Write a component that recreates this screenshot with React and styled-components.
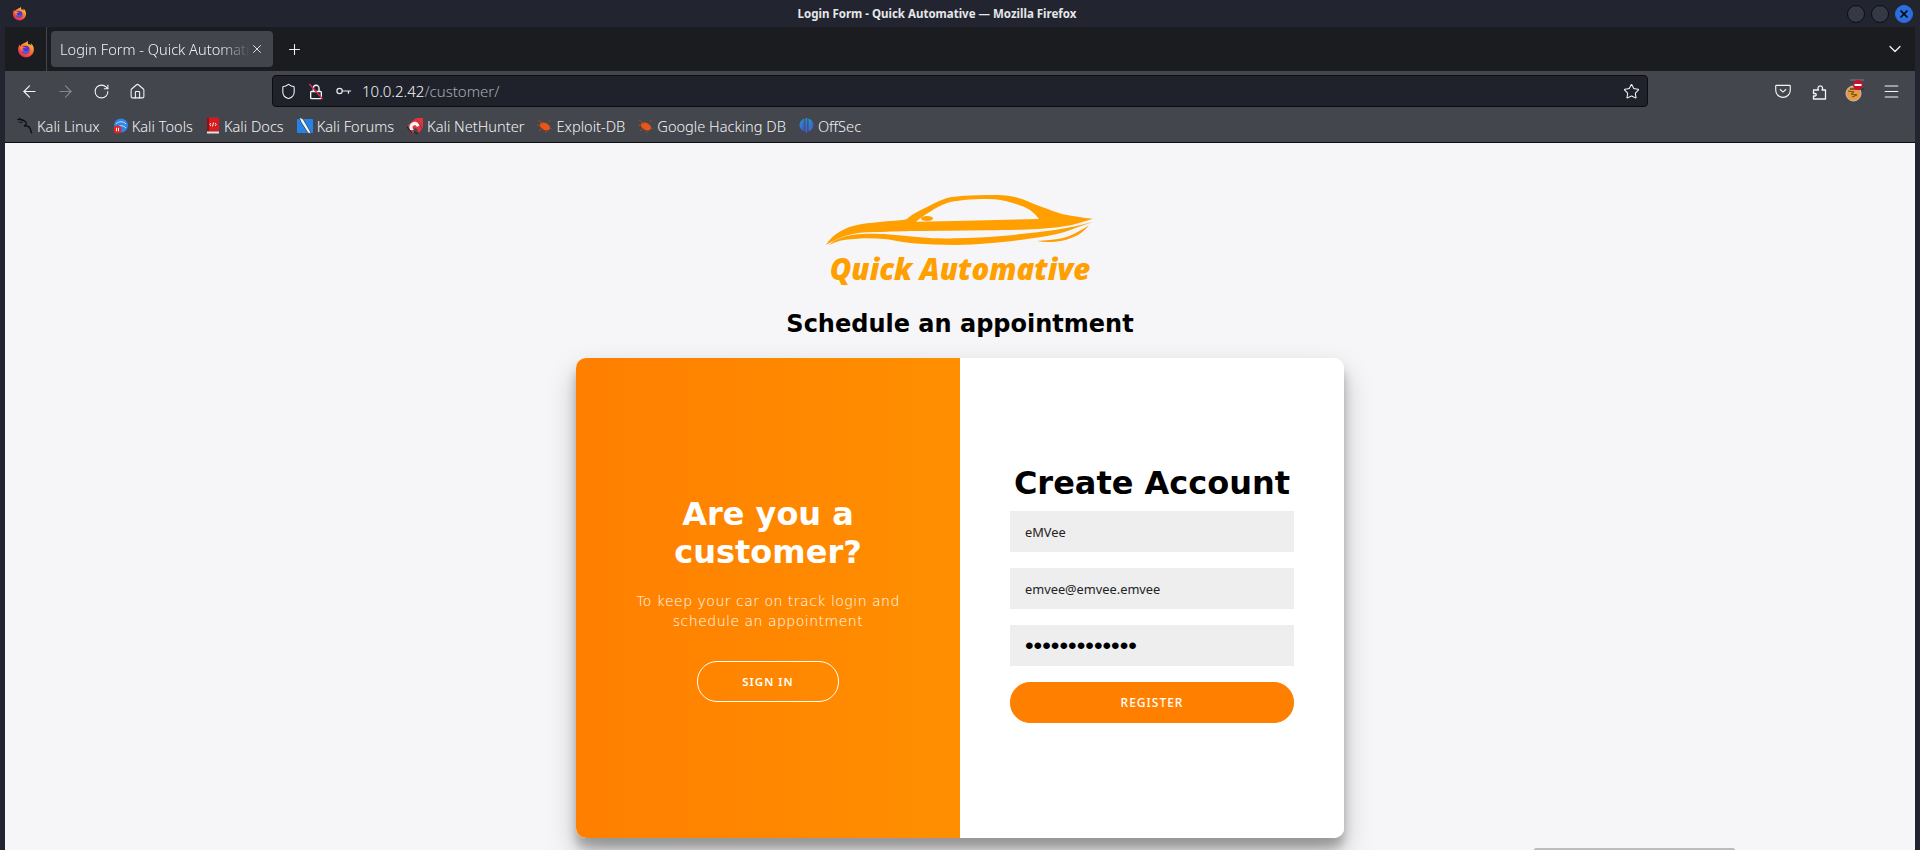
import React from 'react';
import styled, { createGlobalStyle } from 'styled-components';
import { ArrowLeft, ArrowRight, RotateCw, Home, Shield, Star, Menu, ChevronDown, Plus, X } from 'lucide-react';

const GlobalStyle = createGlobalStyle`
  html, body {
    margin: 0;
    padding: 0;
    background: #22252f;
  }
  * {
    box-sizing: border-box;
  }
`;

const chromeFont = `"Noto Sans", "Open Sans", sans-serif`;
const pageFont = `"DejaVu Sans", sans-serif`;

const Desktop = styled.div`
  width: 1920px;
  height: 850px;
  overflow: hidden;
  display: flex;
  flex-direction: column;
  background: #22252f;
  font-family: ${chromeFont};
`;

const TitleBar = styled.div`
  height: 27px;
  flex: none;
  display: flex;
  align-items: center;
  justify-content: space-between;
  padding: 0 7px 0 12px;
  background: #22252f;
`;

const TitleText = styled.div`
  flex: 1;
  text-align: center;
  color: #e6e7ea;
  font-size: 11.5px;
  font-weight: 700;
`;

const WindowControls = styled.div`
  display: flex;
  gap: 6px;
`;

const WindowDot = styled.div`
  width: 18px;
  height: 18px;
  border-radius: 50%;
  display: flex;
  align-items: center;
  justify-content: center;
  background: ${p => (p.$close ? '#2a6fe0' : '#343945')};
  border: 1px solid ${p => (p.$close ? '#2a6fe0' : '#0c0d11')};
  color: #06070a;
`;

const BrowserFrame = styled.div`
  flex: 1;
  min-height: 0;
  margin: 0 5px;
  display: flex;
  flex-direction: column;
`;

const TabBar = styled.div`
  height: 44px;
  flex: none;
  display: flex;
  align-items: center;
  background: #1b1c20;
  color: #f2f2f4;
`;

const FirefoxButton = styled.div`
  width: 42px;
  height: 44px;
  flex: none;
  display: flex;
  align-items: center;
  justify-content: center;
  border-right: 1px solid #44464c;
`;

const Tab = styled.div`
  width: 222px;
  height: 36px;
  margin-left: 4px;
  padding: 0 9px;
  display: flex;
  align-items: center;
  border-radius: 4px;
  background: #42454c;
  font-size: 14.6px;
  font-weight: 300;
`;

const TabLabel = styled.span`
  flex: 1;
  overflow: hidden;
  white-space: nowrap;
  -webkit-mask-image: linear-gradient(to right, #000 84%, transparent 100%);
  mask-image: linear-gradient(to right, #000 84%, transparent 100%);
`;

const NewTab = styled.div`
  width: 42px;
  display: flex;
  justify-content: center;
`;

const TabSpacer = styled.div`
  flex: 1;
`;

const TabList = styled.div`
  width: 40px;
  display: flex;
  justify-content: center;
`;

const NavBar = styled.div`
  height: 39px;
  flex: none;
  padding: 4px 6px 3px;
  display: flex;
  align-items: center;
  background: #43464d;
  color: #f5f5f7;
`;

const NavGroup = styled.div`
  display: flex;
`;

const NavButton = styled.div`
  width: 36px;
  height: 32px;
  display: flex;
  align-items: center;
  justify-content: center;
  color: ${p => (p.$dim ? '#85878c' : '#f5f5f7')};
`;

const UrlBar = styled.div`
  flex: 1;
  height: 32px;
  margin: 0 117px;
  padding: 0 7px 0 1px;
  display: flex;
  align-items: center;
  background: #1f222b;
  border: 1px solid #0c0d10;
  border-radius: 4px;
`;

const UrlIcon = styled.div`
  width: 28px;
  flex: none;
  display: flex;
  align-items: center;
  justify-content: center;
`;

const UrlText = styled.div`
  flex: 1;
  margin-left: 4px;
  font-size: 15px;
  font-weight: 300;
  color: #a9abb0;
`;

const UrlHost = styled.span`
  color: #f5f5f7;
`;

const BookmarksBar = styled.div`
  height: 33px;
  flex: none;
  padding: 0 0 1px 12px;
  display: flex;
  align-items: center;
  gap: 13px;
  background: #43464d;
  border-bottom: 1px solid #0c0d10;
`;

const Bookmark = styled.div`
  display: flex;
  align-items: center;
  gap: 4px;
  color: #f3f3f5;
  font-size: 14.6px;
  font-weight: 300;
  white-space: nowrap;
`;

const Page = styled.main`
  position: relative;
  flex: 1;
  min-height: 0;
  display: flex;
  flex-direction: column;
  align-items: center;
  padding-top: 52px;
  background: #f6f5f7;
  overflow: hidden;
`;

const LogoBlock = styled.div`
  width: 268px;
  display: flex;
  flex-direction: column;
  align-items: center;
`;

const LogoText = styled.div`
  margin-top: 7px;
  color: #ff9f00;
  font-family: "Open Sans", sans-serif;
  font-size: 29.4px;
  font-weight: 800;
  font-style: italic;
  line-height: 30px;
  white-space: nowrap;
`;

const PageTitle = styled.h2`
  margin: 24px 0 18px;
  font-family: ${pageFont};
  font-size: 24px;
  font-weight: 700;
  line-height: 32px;
  color: #000;
`;

const Card = styled.section`
  width: 768px;
  height: 480px;
  flex: none;
  display: flex;
  border-radius: 10px;
  overflow: hidden;
  background: #fff;
`;

const CardShadow = styled.div`
  border-radius: 10px;
  box-shadow: 0 14px 28px rgba(0, 0, 0, 0.25), 0 10px 10px rgba(0, 0, 0, 0.22);
`;

const PromoPanel = styled.div`
  width: 384px;
  padding: 0 40px;
  display: flex;
  flex-direction: column;
  align-items: center;
  justify-content: center;
  text-align: center;
  color: #fff;
  background: linear-gradient(to right, #ff7f00, #ff8f00);
  font-family: ${pageFont};
`;

const PromoTitle = styled.h1`
  margin: 0;
  font-size: 32px;
  font-weight: 700;
  line-height: 38px;
`;

const PromoText = styled.p`
  margin: 20px 0 30px;
  font-size: 14px;
  font-weight: 200;
  line-height: 20px;
  letter-spacing: 0.5px;
`;

const PillButton = styled.button`
  height: 41px;
  width: ${p => (p.$wide ? '100%' : '142px')};
  padding: 0;
  border-radius: 20px;
  border: 1px solid ${p => (p.$ghost ? '#fff' : '#ff7f00')};
  background: ${p => (p.$ghost ? 'transparent' : '#ff7f00')};
  color: #fff;
  font-family: ${chromeFont};
  font-size: ${p => (p.$ghost ? '11.5px' : '12px')};
  font-weight: ${p => (p.$ghost ? 600 : 500)};
  letter-spacing: 1px;
  text-transform: uppercase;
`;

const FormPanel = styled.form`
  width: 384px;
  padding: 0 50px 9px;
  display: flex;
  flex-direction: column;
  align-items: center;
  justify-content: center;
  background: #fff;
`;

const FormTitle = styled.h1`
  margin: 0 0 9px;
  font-family: ${pageFont};
  font-size: 32px;
  font-weight: 700;
  line-height: 38px;
  color: #000;
  white-space: nowrap;
`;

const Field = styled.input`
  width: 100%;
  height: 41px;
  margin-bottom: 16px;
  padding: 0 15px;
  border: none;
  outline: none;
  background: #eee;
  color: ${p => (p.type === 'password' ? '#000' : '#222')};
  font-family: ${p => (p.type === 'password' ? '"Liberation Sans", sans-serif' : chromeFont)};
  font-size: ${p => (p.type === 'password' ? '24.6px' : '12.8px')};
`;

const StatusStub = styled.div`
  position: absolute;
  right: 180px;
  bottom: 0;
  width: 201px;
  height: 2px;
  border-radius: 2px 2px 0 0;
  background: #bdbdbf;
`;

function FirefoxLogo({ size = 18, id }) {
  return (
    <svg width={size} height={size} viewBox="0 0 24 24">
      <defs>
        <linearGradient id={id} x1="0.85" y1="0.05" x2="0.25" y2="1">
          <stop offset="0" stopColor="#ffd23a" />
          <stop offset="0.5" stopColor="#ff6a2b" />
          <stop offset="1" stopColor="#e3245c" />
        </linearGradient>
      </defs>
      <path fill={`url(#${id})`} d="M14 1c1 2.4.2 3.8 1 4.6 2-.2 3.6.8 4.2 1.6C19 5.800 18.600 5 18 4c2.800 2 4.500 5 4.500 8.500C22.500 18.300 17.800 23 12 23S1.500 18.300 1.500 12.500C1.500 10 2.300 7.700 3.600 6c0 1 .2 1.800.8 2.200C5.500 5.500 9 5 10 3.800 11.500 3.600 13 2.600 14 1z" />
      <circle cx="11.500" cy="13" r="5.200" fill="#5a2bd0" />
      <path fill="#2f7be8" d="M7 11c1 3 4 4 6 3.600 2-.4 3-1.800 3.600-3.400.6 3-1.800 6.600-5.100 6.600-3 0-5.100-3.400-4.500-6.800z" opacity="0.75" />
      <path fill="#ff8a2b" d="M4.400 8.200c2 1.600 5.600 1 7.600 1.800-1.600 1.200-3.400 1.400-4.600.6-.2 1.800.6 3.800 2 5-3-.6-5.400-4-5-7.400z" />
    </svg>
  );
}

function LockOff() {
  return (
    <svg width="16" height="19" viewBox="0 0 18 20" fill="none">
      <path d="M3.500 10h10.500a1 1 0 0 1 1 1v6a1 1 0 0 1-1 1H4a1 1 0 0 1-1-1v-6a1 1 0 0 1 .5-1z" stroke="#f5f5f7" strokeWidth="1.500" />
      <path d="M6 10V6.200a3.200 3.200 0 0 1 6.400 0V10" stroke="#f5f5f7" strokeWidth="1.500" />
      <path d="M1.500 1.500l15 17" stroke="#e22850" strokeWidth="1.500" />
    </svg>
  );
}

function KeyIcon() {
  return (
    <svg width="16" height="10" viewBox="0 0 18 10" fill="none" stroke="#e8e8ea" strokeWidth="1.400">
      <circle cx="4" cy="5" r="3" />
      <path d="M7 5h10M14 5v3" />
    </svg>
  );
}

function PocketIcon() {
  return (
    <svg width="16" height="14" viewBox="0 0 18 16" fill="none" stroke="#f5f5f7" strokeWidth="1.300">
      <path d="M1.500 1.500h15a.8.8 0 0 1 .8.800V7a8.300 8.300 0 0 1-16.600 0V2.300a.8.8 0 0 1 .8-.8z" />
      <path d="M5.500 6l3.500 3.200L12.500 6" />
    </svg>
  );
}

function PuzzleIcon() {
  return (
    <svg width="15" height="17" viewBox="0 0 14 17" fill="none" stroke="#f5f5f7" strokeWidth="1.300" strokeLinejoin="round">
      <path d="M1 16h12V7h-3.500c.8-1 .8-2 .3-3-.8-1.600-3.300-1.600-4 0-.5 1-.4 2 .2 3H1v3.500h1.500a1 1 0 0 1 0 2.500H1z" />
    </svg>
  );
}

function ProfileBadge() {
  return (
    <svg width="20" height="24" viewBox="0 0 20 24">
      <circle cx="8.500" cy="14.500" r="7.500" fill="#e99a3c" stroke="#c9c2b6" strokeWidth="1" />
      <path d="M3 12l6 1-3 2 6 1-5 2" fill="none" stroke="#6d4a1e" strokeWidth="1" />
      <rect x="5" y="0.500" width="14" height="1" fill="#7a7c80" />
      <rect x="5" y="9" width="14" height="2" fill="#2e3036" opacity="0.6" />
      <circle cx="13" cy="6" r="5" fill="#c8102e" />
      <rect x="9.500" y="5" width="7" height="2" fill="#fff" />
    </svg>
  );
}

function KaliDragon() {
  return (
    <svg width="16" height="17" viewBox="0 0 16 17" fill="none" stroke="#0d0d10" strokeWidth="1.300" strokeLinecap="round">
      <path d="M1 2.500c2.500-.5 5 .2 7 1.800 2.300 1.900 1.500 4-1 4.700 2.500-.3 5.300.6 6.200 2.800.5 1.300.7 2.700 1.300 4" />
      <path d="M3 1l2 3M5 5.500l-3-.5" strokeWidth="0.900" />
    </svg>
  );
}

function KaliTools() {
  return (
    <svg width="15" height="16" viewBox="0 0 15 16">
      <circle cx="8" cy="7.500" r="7" fill="#2f86e6" />
      <path d="M3 6c3-3 7-3 10 0M5 9c2-2 5-2 8 1" fill="none" stroke="#d7e9fb" strokeWidth="0.900" />
      <circle cx="4.500" cy="11.500" r="4" fill="#e0242a" />
      <rect x="3" y="9.800" width="1" height="3.400" fill="#fff" />
      <rect x="5" y="9.800" width="1" height="3.400" fill="#fff" />
    </svg>
  );
}

function KaliDocs() {
  return (
    <svg width="14" height="17" viewBox="0 0 14 17">
      <rect x="1" y="0.500" width="12" height="14" fill="#d61a1f" />
      <rect x="1" y="0.500" width="2" height="14" fill="#8c1014" />
      <rect x="1" y="14.500" width="12" height="2" fill="#e6e1da" />
      <path d="M5 6L3.800 7.500 5 9M9 6l1.200 1.500L9 9M7.600 5.500L6.400 9.500" fill="none" stroke="#fff" strokeWidth="0.900" />
    </svg>
  );
}

function KaliForums() {
  return (
    <svg width="16" height="17" viewBox="0 0 16 17">
      <rect x="0" y="2" width="16" height="14" rx="1" fill="#2583e8" />
      <path d="M2 0l4 2 7 12 1 3-3-1L4 5z" fill="#f4f6f8" stroke="#1c1e24" strokeWidth="0.600" />
    </svg>
  );
}

function KaliNetHunter() {
  return (
    <svg width="16" height="17" viewBox="0 0 16 17">
      <path d="M9 1h7v11z" fill="#e5323a" />
      <path d="M1 8l8-7 6 11-3 4-3-5-3 1 1 4H4z" fill="#e5323a" />
      <path d="M3 13c-2-5 2-9 6-8 2 .5 3 2 3.500 3.500L10 10C9 8 7 8 6 9c-1 1.200-.5 3 1 4z" fill="#f4f4f4" />
      <path d="M0 10l5 6M7 15l4 2" stroke="#16171b" strokeWidth="1" />
    </svg>
  );
}

function BugIcon() {
  return (
    <svg width="15" height="14" viewBox="0 0 15 14">
      <ellipse cx="8" cy="7.500" rx="5.500" ry="3.500" fill="#e9561a" transform="rotate(25 8 7.500)" />
      <path d="M1 1l5 4M0 6l4 1M2 12l4-3M8 12l1 2M12 3l1-2M14 9l1 1" stroke="#b94412" strokeWidth="0.900" fill="none" />
    </svg>
  );
}

function OffSecIcon() {
  return (
    <svg width="15" height="17" viewBox="0 0 15 17">
      <defs>
        <linearGradient id="offsec" x1="0" y1="0" x2="1" y2="1">
          <stop offset="0" stopColor="#13a7c9" />
          <stop offset="1" stopColor="#5a3fd0" />
        </linearGradient>
      </defs>
      <path d="M5.500 1.500C2.500 2.300.5 5 .5 8s2 5.700 5 6.500z" fill="url(#offsec)" />
      <path d="M9.500 1.500c3 .8 5 3.500 5 6.500s-2 5.700-5 6.500z" fill="url(#offsec)" />
      <path d="M6.500 1h2v13l-1 3-1-3z" fill="url(#offsec)" />
    </svg>
  );
}

// coordinates in the viewBox are the page pixels the logo sits on
function CarLogo() {
  return (
    <svg width="268" height="52" viewBox="826 195 268 52" fill="#ff9f00">
      <path
        fillRule="evenodd"
        d="M826 245C831 236 842 229 853 226C863 223 880 222 903 220C906 219.5 907 219 908 218C914 213 921 210 927 207C934 203 941 200 947 198C955 196 970 195 995 195C1008 195 1017 197 1022 199C1030 202 1036 205 1042 207C1050 210 1056 212 1062 214C1072 216 1083 218 1093 218.7C1086 221 1079 223 1072 225C1062 227 1050 228 1038 229C1020 230 1005 230 988 230.3L920 231C905 231 895 231.500 887 231.700C878 232 869 232 860 232.700C853 233.500 848 235 843 236.700C837 239 831 242 826 245ZM916 221.700C920 218 925 214.500 930 211.700C936 208 941 205 947 203C955 200.500 970 199 988 199C997 199 1005 200.500 1012 202.700C1020 205 1026 207 1030 210C1034 213 1037 216 1039 219L955 221Z"
      />
      <ellipse cx="927" cy="218.500" rx="6" ry="2.400" />
      <path d="M829 245C832 242 836 240 840 238.300C848 235 856 234 863 234C872 233.500 880 234 887 234.300C898 235 909 236.500 920 237.300C932 238.500 944 238.700 955 238.300C972 238 988 237 1005 235.700C1022 234 1038 232.500 1055 230C1068 228 1081 225 1093 221.700C1083 225 1072 229.500 1062 232.700C1052 235.500 1042 237 1032 238.300C1017 240.500 1002 242.500 988 243.300C977 244.300 966 245 955 245C941 245 927 244.500 913 243.300C904 242.500 895 240.500 887 239.300C879 238.500 871 238 863 238.300C855 238.700 847 239.500 840 240.700C836 242 832 243.500 829 245Z" />
      <path d="M1037 241C1046 240.500 1054 240 1062 238.300C1068 236.500 1073 234.500 1078 231.700C1082 229.500 1086 227.500 1089 225C1086 229 1082 232.500 1078 235C1073 237.500 1068 239.500 1062 240.700C1054 242 1045 242.500 1037 241Z" />
    </svg>
  );
}

const bookmarks = [
  { label: 'Kali Linux', icon: <KaliDragon /> },
  { label: 'Kali Tools', icon: <KaliTools /> },
  { label: 'Kali Docs', icon: <KaliDocs /> },
  { label: 'Kali Forums', icon: <KaliForums /> },
  { label: 'Kali NetHunter', icon: <KaliNetHunter /> },
  { label: 'Exploit-DB', icon: <BugIcon /> },
  { label: 'Google Hacking DB', icon: <BugIcon /> },
  { label: 'OffSec', icon: <OffSecIcon /> },
];

function BrowserChrome() {
  return (
    <>
      <TabBar>
        <FirefoxButton>
          <FirefoxLogo size={18} id="ffTab" />
        </FirefoxButton>
        <Tab>
          <TabLabel>Login Form - Quick Automative</TabLabel>
          <X size={14} strokeWidth={1.5} />
        </Tab>
        <NewTab>
          <Plus size={17} strokeWidth={1.5} />
        </NewTab>
        <TabSpacer />
        <TabList>
          <ChevronDown size={20} strokeWidth={1.5} />
        </TabList>
      </TabBar>
      <NavBar>
        <NavGroup>
          <NavButton><ArrowLeft size={19} strokeWidth={1.4} /></NavButton>
          <NavButton $dim><ArrowRight size={19} strokeWidth={1.4} /></NavButton>
          <NavButton><RotateCw size={17} strokeWidth={1.5} /></NavButton>
          <NavButton><Home size={17} strokeWidth={1.5} /></NavButton>
        </NavGroup>
        <UrlBar>
          <UrlIcon><Shield size={17} strokeWidth={1.5} /></UrlIcon>
          <UrlIcon><LockOff /></UrlIcon>
          <UrlIcon><KeyIcon /></UrlIcon>
          <UrlText><UrlHost>10.0.2.42</UrlHost>/customer/</UrlText>
          <Star size={17} strokeWidth={1.5} />
        </UrlBar>
        <NavGroup>
          <NavButton><PocketIcon /></NavButton>
          <NavButton><PuzzleIcon /></NavButton>
          <NavButton><ProfileBadge /></NavButton>
          <NavButton><Menu size={19} strokeWidth={1.4} /></NavButton>
        </NavGroup>
      </NavBar>
      <BookmarksBar>
        {bookmarks.map(b => (
          <Bookmark key={b.label}>
            {b.icon}
            {b.label}
          </Bookmark>
        ))}
      </BookmarksBar>
    </>
  );
}

function App() {
  return (
    <Desktop>
      <GlobalStyle />
      <TitleBar>
        <FirefoxLogo size={15} id="ffTitle" />
        <TitleText>Login Form - Quick Automative — Mozilla Firefox</TitleText>
        <WindowControls>
          <WindowDot />
          <WindowDot />
          <WindowDot $close><X size={12} strokeWidth={3.5} /></WindowDot>
        </WindowControls>
      </TitleBar>
      <BrowserFrame>
        <BrowserChrome />
        <Page>
          <LogoBlock>
            <CarLogo />
            <LogoText>Quick Automative</LogoText>
          </LogoBlock>
          <PageTitle>Schedule an appointment</PageTitle>
          <CardShadow>
            <Card>
              <PromoPanel>
                <PromoTitle>Are you a customer?</PromoTitle>
                <PromoText>To keep your car on track login and schedule an appointment</PromoText>
                <PillButton type="button" $ghost>Sign In</PillButton>
              </PromoPanel>
              <FormPanel>
                <FormTitle>Create Account</FormTitle>
                <Field type="text" defaultValue="eMVee" readOnly />
                <Field type="email" defaultValue="emvee@emvee.emvee" readOnly />
                <Field type="password" defaultValue="emvee12345678" readOnly />
                <PillButton type="button" $wide>Register</PillButton>
              </FormPanel>
            </Card>
          </CardShadow>
          <StatusStub />
        </Page>
      </BrowserFrame>
    </Desktop>
  );
}

export default App;
